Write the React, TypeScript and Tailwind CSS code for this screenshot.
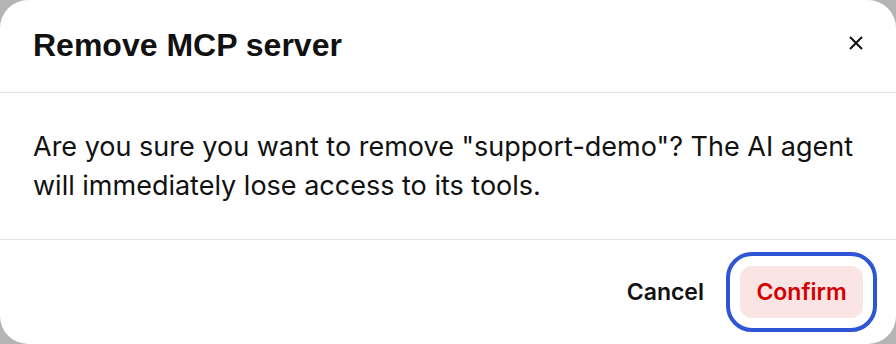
export default function App() {
  return (
    <div className="w-[896px] h-[344px] bg-[#b4b4b4]">
      <div className="w-full h-full bg-white rounded-[28px] flex flex-col overflow-hidden">
        {/* Header */}
        <div className="h-[93px] px-[33px] flex items-center justify-between border-b border-[#e4e4e4]">
          <h2 className="text-[32px] font-bold text-[#111] font-['Liberation_Sans',Arial,sans-serif] leading-none -mt-[2px]">
            Remove MCP server
          </h2>
          <button className="w-[14px] h-[14px] -mt-[6px] text-[#111]">
            <svg viewBox="0 0 14 14" width="14" height="14" fill="none" stroke="currentColor" strokeWidth="2">
              <path d="M1 1L13 13M13 1L1 13" />
            </svg>
          </button>
        </div>

        {/* Body */}
        <div className="h-[147px] px-[33px] flex items-center border-b border-[#e4e4e4]">
          <p className="text-[27px] leading-[39px] text-[#111] font-['Inter',sans-serif]">
            Are you sure you want to remove "support-demo"? The AI agent will immediately lose access to its tools.
          </p>
        </div>

        {/* Footer */}
        <div className="flex-1 px-[33px] flex items-center justify-end gap-[36px] font-['Inter',sans-serif]">
          <button className="text-[23px] font-semibold text-[#111]">Cancel</button>
          <button className="h-[52px] w-[123px] rounded-[12px] bg-[#fae4e4] text-[#d40000] text-[23px] font-semibold outline-4 outline-[#2f55d4] outline-offset-[10px]">
            Confirm
          </button>
        </div>
      </div>
    </div>
  );
}
